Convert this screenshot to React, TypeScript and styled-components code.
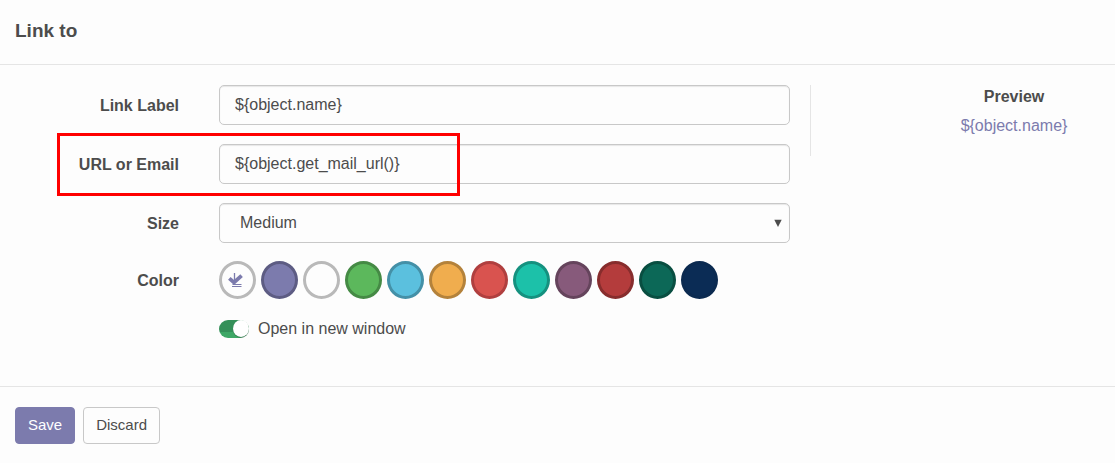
import React from "react";
import styled, { createGlobalStyle } from "styled-components";

const GlobalStyle = createGlobalStyle`
  *, *::before, *::after { box-sizing: border-box; }
  body {
    margin: 0;
    background: #fdfdfd;
    color: #4c4c4c;
    font-family: "Liberation Sans", Arial, sans-serif;
    font-size: 16px;
    line-height: 24px;
  }
  button, input, select { font: inherit; color: inherit; margin: 0; }
`;

const Dialog = styled.form`
  display: flex;
  flex-direction: column;
`;

const Header = styled.header`
  padding: 17px 15px 19px;
  border-bottom: 1px solid #e5e5e5;
`;

const Title = styled.h4`
  margin: 0;
  font-size: 19px;
  line-height: 28px;
`;

const Body = styled.main`
  display: grid;
  grid-template-columns: minmax(0, 1fr) 305px;
  column-gap: 20px;
  align-items: start;
  padding: 20px 0 45px;
`;

const Fields = styled.div`
  display: flex;
  flex-direction: column;
  gap: 19px;
`;

const Choices = styled.div`
  display: flex;
  flex-direction: column;
  gap: 18px;
  margin-top: -1px;
`;

const Row = styled.div`
  position: relative;
  display: grid;
  grid-template-columns: 179px minmax(0, 1fr);
  column-gap: 40px;
  align-items: center;
`;

const Label = styled.label`
  padding-top: 2px;
  font-weight: bold;
  text-align: right;
`;

const GroupLabel = styled.span`
  padding-top: 2px;
  font-weight: bold;
  text-align: right;
`;

const Control = styled.input`
  width: 100%;
  height: 40px;
  padding: 0 15px;
  border: 1px solid #c8c8c8;
  border-radius: 5px;
  background: #fdfdfd;
  box-shadow: inset 0 1px 1px rgba(0, 0, 0, 0.09);
  outline: none;
`;

const SelectBox = styled.div`
  display: grid;
  align-items: center;
  > * { grid-area: 1 / 1; }
`;

const Select = styled(Control).attrs({ as: "select" })`
  appearance: none;
  padding: 0 20px;
`;

const Arrow = styled.svg`
  justify-self: end;
  width: 8px;
  height: 8px;
  margin-right: 8px;
  fill: #4c4c4c;
  pointer-events: none;
`;

const Highlight = styled.div`
  position: absolute;
  inset: -11px auto -12px 57px;
  width: 403px;
  border: 3px solid #ff0000;
  pointer-events: none;
`;

const Palette = styled.div`
  display: flex;
  flex-wrap: wrap;
  gap: 5px;
`;

const Choice = styled.label`
  display: grid;
  place-items: center;
  > * { grid-area: 1 / 1; }
`;

const Swatch = styled.input<{ $fill: string; $edge: string }>`
  appearance: none;
  width: 37px;
  height: 38px;
  border: 3px solid ${(p) => p.$edge};
  border-radius: 50%;
  background: ${(p) => p.$fill};
`;

const LinkIcon = styled.svg`
  width: 16px;
  height: 16px;
  margin-right: 5px;
  pointer-events: none;
`;

const ToggleLabel = styled.label`
  grid-column: 2;
  justify-self: start;
  display: flex;
  align-items: center;
  gap: 9px;
`;

const Toggle = styled.input`
  appearance: none;
  display: flex;
  justify-content: flex-end;
  width: 30px;
  height: 18px;
  border-radius: 9px;
  background: linear-gradient(#349059 0 12px, #3ea866 12px);
  &::before {
    content: "";
    width: 16px;
    height: 17px;
    border-radius: 50%;
    background: #fff;
    box-shadow: 0 1px 0 rgba(0, 0, 0, 0.25);
  }
`;

const Preview = styled.aside`
  height: 71px;
  padding-left: 102px;
  border-left: 1px solid #e5e5e5;
  text-align: center;
`;

const PreviewTitle = styled.h5`
  margin: 0 0 5px;
  font-size: 16px;
  line-height: 24px;
`;

const PreviewLink = styled.a`
  color: #7c7bad;
  text-decoration: none;
`;

const Footer = styled.footer`
  display: flex;
  gap: 8px;
  padding: 20px 15px;
  border-top: 1px solid #e5e5e5;
`;

const Button = styled.button<{ $primary?: boolean }>`
  height: 37px;
  padding: 0 12px 2px;
  border: 1px solid ${(p) => (p.$primary ? "#7c7bad" : "#c8c8c8")};
  border-radius: 4px;
  background: ${(p) => (p.$primary ? "#7c7bad" : "#fdfdfd")};
  color: ${(p) => (p.$primary ? "#fff" : "#4c4c4c")};
  font-size: 15px;
`;

const colors = [
  { name: "Link", fill: "#fdfdfd", edge: "#b9b9b9" },
  { name: "Primary", fill: "#7c7bad", edge: "#5d5c83" },
  { name: "White", fill: "#fdfdfd", edge: "#b9b9b9" },
  { name: "Success", fill: "#5cb85c", edge: "#458a45" },
  { name: "Info", fill: "#5bc0de", edge: "#4490a7" },
  { name: "Warning", fill: "#f0ad4e", edge: "#b4823b" },
  { name: "Danger", fill: "#d9534f", edge: "#b03f3f" },
  { name: "Alpha", fill: "#1cc1a9", edge: "#15917f" },
  { name: "Beta", fill: "#875a7b", edge: "#65445c" },
  { name: "Gamma", fill: "#b43c3c", edge: "#872d2d" },
  { name: "Delta", fill: "#0c6857", edge: "#094e41" },
  { name: "Epsilon", fill: "#0b2c55", edge: "#0b2a50" },
];

export default function App() {
  return (
    <>
      <GlobalStyle />
      <Dialog onSubmit={(e) => e.preventDefault()}>
        <Header>
          <Title>Link to</Title>
        </Header>
        <Body>
          <Fields>
            <Row>
              <Label htmlFor="link-label">Link Label</Label>
              <Control id="link-label" defaultValue="${object.name}" />
            </Row>
            <Row>
              <Label htmlFor="link-url">URL or Email</Label>
              <Control id="link-url" defaultValue="${object.get_mail_url()}" />
              <Highlight />
            </Row>
            <Row>
              <Label htmlFor="link-size">Size</Label>
              <SelectBox>
                <Select id="link-size" defaultValue="Medium">
                  <option>Medium</option>
                </Select>
                <Arrow viewBox="0 0 8 8">
                  <path d="M0.3 0.8h7.4L4 7.9z" />
                </Arrow>
              </SelectBox>
            </Row>
            <Choices>
              <Row>
                <GroupLabel id="link-color">Color</GroupLabel>
                <Palette role="radiogroup" aria-labelledby="link-color">
                  {colors.map((c, i) => (
                    <Choice key={c.name}>
                      <Swatch
                        type="radio"
                        name="color"
                        aria-label={c.name}
                        defaultChecked={i === 0}
                        $fill={c.fill}
                        $edge={c.edge}
                      />
                      {i === 0 && (
                        <LinkIcon viewBox="0 0 16 16" fill="none" stroke="#7c7bad">
                          <path d="M7.5 1v8" strokeWidth="1.3" />
                          <path d="M2.3 6.4l4.7 4 7.6-6.8" strokeWidth="3.8" />
                          <path d="M5.5 12.5h9M5 14.5h9.5" strokeWidth="1" />
                        </LinkIcon>
                      )}
                    </Choice>
                  ))}
                </Palette>
              </Row>
              <Row>
                <ToggleLabel>
                  <Toggle type="checkbox" defaultChecked />
                  Open in new window
                </ToggleLabel>
              </Row>
            </Choices>
          </Fields>
          <Preview>
            <PreviewTitle>Preview</PreviewTitle>
            <PreviewLink href="#">{"${object.name}"}</PreviewLink>
          </Preview>
        </Body>
        <Footer>
          <Button type="submit" $primary>
            Save
          </Button>
          <Button type="button">Discard</Button>
        </Footer>
      </Dialog>
    </>
  );
}
